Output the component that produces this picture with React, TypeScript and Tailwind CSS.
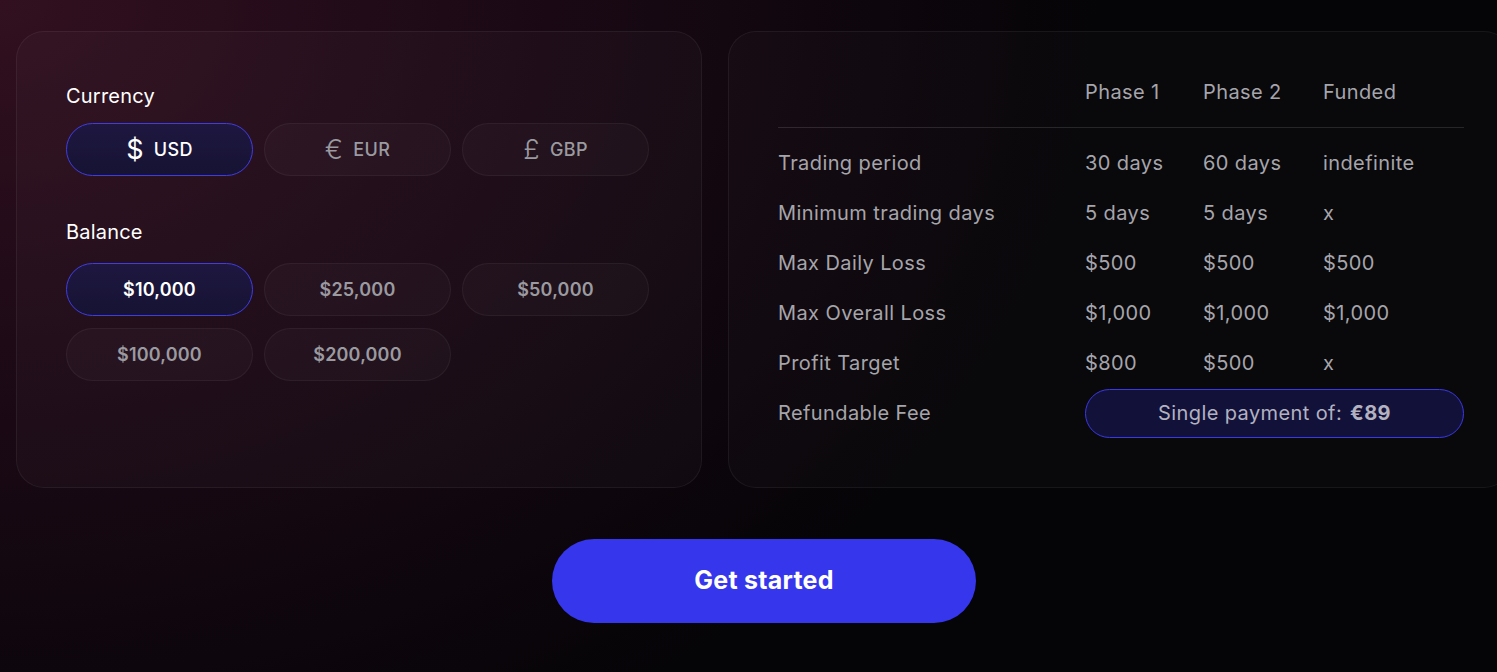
import React from "react";

const font = { fontFamily: "Inter, 'Noto Sans', sans-serif" };

const rows: [string, string, string, string][] = [
  ["Trading period", "30 days", "60 days", "indefinite"],
  ["Minimum trading days", "5 days", "5 days", "x"],
  ["Max Daily Loss", "$500", "$500", "$500"],
  ["Max Overall Loss", "$1,000", "$1,000", "$1,000"],
  ["Profit Target", "$800", "$500", "x"],
];

function Choice({ active, bold, children }: { active?: boolean; bold?: boolean; children: React.ReactNode }) {
  const weight = bold ? " font-semibold tracking-[0.01em]" : " font-medium tracking-[0.02em]";
  return (
    <button
      className={
        (active
          ? "h-[53px] w-[187px] rounded-full border border-[#3f3ce6] bg-gradient-to-b from-[#1e1740] to-[#161333] text-white flex items-center justify-center gap-[10px] text-[18px]"
          : "h-[53px] w-[187px] rounded-full border border-white/[0.05] bg-white/[0.025] text-[#9b9aa0] flex items-center justify-center gap-[10px] text-[18px]") + weight
      }
    >
      {children}
    </button>
  );
}

export default function App() {
  return (
    <div className="relative h-[672px] w-full overflow-hidden bg-[#050407]" style={font}>
      <div className="absolute inset-0 bg-[radial-gradient(ellipse_1100px_850px_at_0%_0%,#32101f_0%,#1e0a17_40%,rgba(5,4,7,0)_100%)]" />
      <div className="relative w-[1496px] ml-[16px] pt-[31px]">
        <div className="flex gap-[26px]">
          {/* Left card */}
          <div className="w-[686px] h-[457px] shrink-0 rounded-[28px] border border-white/[0.06] bg-white/[0.025] pl-[49px] pt-[50px]">
            <div className="text-white text-[20px] tracking-[0.01em] leading-[28px] mb-[13px]">Currency</div>
            <div className="flex gap-[11px]">
              <Choice active>
                <span className="text-[27px] leading-none font-normal">$</span>
                <span>USD</span>
              </Choice>
              <Choice>
                <span className="text-[27px] leading-none font-light">€</span>
                <span>EUR</span>
              </Choice>
              <Choice>
                <span className="text-[27px] leading-none font-light">£</span>
                <span>GBP</span>
              </Choice>
            </div>
            <div className="text-white text-[20px] tracking-[0.01em] leading-[28px] mt-[42px] mb-[17px]">Balance</div>
            <div className="grid grid-cols-[187px_187px_187px] gap-x-[11px] gap-y-[12px]">
              <Choice active bold>$10,000</Choice>
              <Choice bold>$25,000</Choice>
              <Choice bold>$50,000</Choice>
              <Choice bold>$100,000</Choice>
              <Choice bold>$200,000</Choice>
            </div>
          </div>

          {/* Right card */}
          <div className="w-[784px] h-[457px] shrink-0 rounded-[28px] border border-white/[0.06] bg-white/[0.02] pl-[49px] pt-[35px]">
            <div className="w-[686px] text-[#a6a5ab] text-[20px] tracking-[0.02em]">
              <div className="grid grid-cols-[307px_118px_120px_141px] h-[50px] items-center">
                <div />
                <div>Phase 1</div>
                <div>Phase 2</div>
                <div>Funded</div>
              </div>
              <div className="mt-[10px] h-px bg-white/[0.12]" />
              <div className="mt-[10px]">
                {rows.map((r) => (
                  <div key={r[0]} className="grid grid-cols-[307px_118px_120px_141px] h-[50px] items-center">
                    <div>{r[0]}</div>
                    <div>{r[1]}</div>
                    <div>{r[2]}</div>
                    <div>{r[3]}</div>
                  </div>
                ))}
                <div className="grid grid-cols-[307px_379px] h-[50px] items-center">
                  <div>Refundable Fee</div>
                  <div className="h-[49px] rounded-full border border-[#3b38e6] bg-[#12113a] flex items-center justify-center gap-[8px] text-[#b3b2c0]">
                    <span>Single payment of:</span>
                    <span className="font-bold">€89</span>
                  </div>
                </div>
              </div>
            </div>
          </div>
        </div>

        <div className="flex justify-center mt-[51px]">
          <button className="h-[84px] w-[424px] rounded-full bg-[#3636ec] text-white text-[25px] font-bold tracking-[0.01em]">
            Get started
          </button>
        </div>
      </div>
    </div>
  );
}
